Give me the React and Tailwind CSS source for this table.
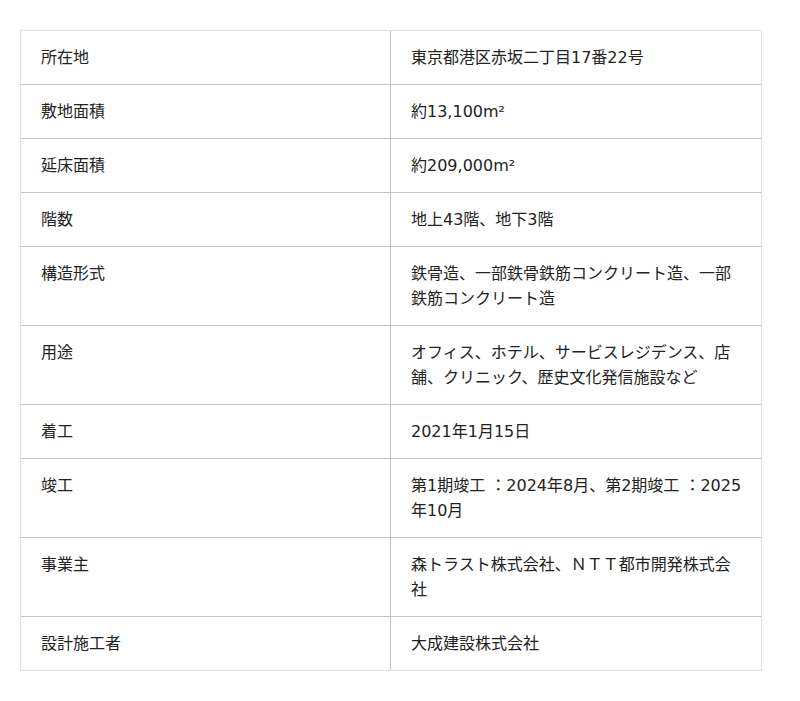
import React from 'react';

const rows = [
  { label: '所在地', value: '東京都港区赤坂二丁目17番22号' },
  { label: '敷地面積', value: '約13,100m²' },
  { label: '延床面積', value: '約209,000m²' },
  { label: '階数', value: '地上43階、地下3階' },
  { label: '構造形式', value: '鉄骨造、一部鉄骨鉄筋コンクリート造、一部鉄筋コンクリート造' },
  { label: '用途', value: 'オフィス、ホテル、サービスレジデンス、店舗、クリニック、歴史文化発信施設など' },
  { label: '着工', value: '2021年1月15日' },
  { label: '竣工', value: '第1期竣工 ：2024年8月、第2期竣工 ：2025年10月' },
  { label: '事業主', value: '森トラスト株式会社、ＮＴＴ都市開発株式会社' },
  { label: '設計施工者', value: '大成建設株式会社' },
];

export default function App() {
  return (
    <div
      className="min-h-screen bg-white pt-[30px] pl-[20px] text-[16px] leading-[25px] text-[#222]"
      style={{ fontFamily: '"DejaVu Sans", "Noto Sans CJK JP", sans-serif' }}
    >
      {/* Spec table */}
      <div className="w-[742px] border border-[#e0e0e0]">
        {rows.map((row, i) => (
          <div
            key={row.label}
            className={`grid grid-cols-[370px_1fr] ${i > 0 ? 'border-t border-[#c4c4c4]' : ''}`}
          >
            <div className="border-r border-[#c4c4c4] px-[20px] py-[14px]">{row.label}</div>
            <div className="pl-[20px] pr-[17px] py-[14px]">{row.value}</div>
          </div>
        ))}
      </div>
    </div>
  );
}
